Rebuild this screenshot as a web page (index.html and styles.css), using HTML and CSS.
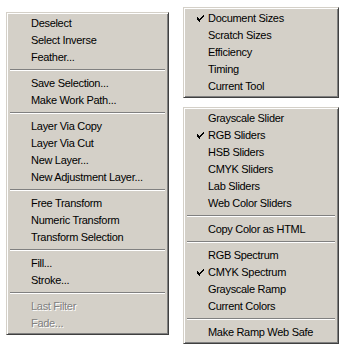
FILE: index.html
```html
<!DOCTYPE html>
<html lang="en">

<head>
    <meta charset="UTF-8">
    <title>Menus</title>
    <link rel="stylesheet" href="styles.css">
</head>

<body>
    <div class="sheet">
        <!-- 选区菜单 -->
        <ul class="menu menu-left">
            <li>Deselect</li>
            <li>Select Inverse</li>
            <li>Feather...</li>
            <li class="sep"></li>
            <li>Save Selection...</li>
            <li>Make Work Path...</li>
            <li class="sep"></li>
            <li>Layer Via Copy</li>
            <li>Layer Via Cut</li>
            <li>New Layer...</li>
            <li>New Adjustment Layer...</li>
            <li class="sep"></li>
            <li>Free Transform</li>
            <li>Numeric Transform</li>
            <li>Transform Selection</li>
            <li class="sep"></li>
            <li>Fill...</li>
            <li>Stroke...</li>
            <li class="sep"></li>
            <li class="off">Last Filter</li>
            <li class="off">Fade...</li>
        </ul>

        <div class="col">
            <ul class="menu menu-right">
                <li class="checked">Document Sizes</li>
                <li>Scratch Sizes</li>
                <li>Efficiency</li>
                <li>Timing</li>
                <li>Current Tool</li>
            </ul>

            <ul class="menu menu-right">
                <li>Grayscale Slider</li>
                <li class="checked">RGB Sliders</li>
                <li>HSB Sliders</li>
                <li>CMYK Sliders</li>
                <li>Lab Sliders</li>
                <li>Web Color Sliders</li>
                <li class="sep"></li>
                <li>Copy Color as HTML</li>
                <li class="sep"></li>
                <li>RGB Spectrum</li>
                <li class="checked">CMYK Spectrum</li>
                <li>Grayscale Ramp</li>
                <li>Current Colors</li>
                <li class="sep"></li>
                <li>Make Ramp Web Safe</li>
            </ul>
        </div>
    </div>
</body>

</html>
```

FILE: styles.css
```css
* {
    padding: 0;
    margin: 0;
    list-style: none;
    box-sizing: border-box;
}

body {
    background: #fff;
    font-family: 'Liberation Sans', Arial, sans-serif;
    font-size: 11px;
    letter-spacing: -0.3px;
    color: #000;
}

.sheet {
    display: flex;
    align-items: flex-start;
    gap: 14px;
    padding: 7px 0 0 6px;
}

.col {
    display: flex;
    flex-direction: column;
    gap: 9px;
}

.menu {
    background: #d4d0c8;
    border-top: 1px solid #d4d0c8;
    border-left: 1px solid #d4d0c8;
    border-right: 1px solid #404040;
    border-bottom: 1px solid #404040;
    box-shadow: inset 1px 1px 0 #fff, inset -1px -1px 0 #808080;
    padding: 2px;
}

.menu-left {
    width: 163px;
    margin-top: 5px;
}

.menu-right {
    width: 156px;
}

.menu li {
    position: relative;
    height: 17px;
    line-height: 16px;
    padding-left: 22px;
    white-space: nowrap;
}

.menu li.sep {
    height: 9px;
    margin: 0 1px;
    padding: 3px 0 0;
}

.menu li.sep::after {
    content: '';
    display: block;
    height: 1px;
    background: #808080;
    border-bottom: 1px solid #fff;
    box-sizing: content-box;
}

.menu li.off {
    color: #808080;
    text-shadow: 1px 1px 0 #fff;
}

.menu li.checked::before {
    content: '';
    position: absolute;
    left: 11px;
    top: 5px;
    width: 7px;
    height: 7px;
    background: url("data:image/svg+xml,%3Csvg xmlns='http://www.w3.org/2000/svg' width='7' height='7' shape-rendering='crispEdges'%3E%3Cpath d='M6 0h1v1h-1zM5 1h1v1h-1zM0 2h1v1h-1zM4 2h1v1h-1zM0 3h2v1h-2zM3 3h2v1h-2zM0 4h4v1h-4zM1 5h2v1h-2zM2 6h1v1h-1z M6 1h1v1h-1zM5 2h1v1h-1zM1 4h1v1h-1z' fill='%23000'/%3E%3C/svg%3E") no-repeat;
}
```
